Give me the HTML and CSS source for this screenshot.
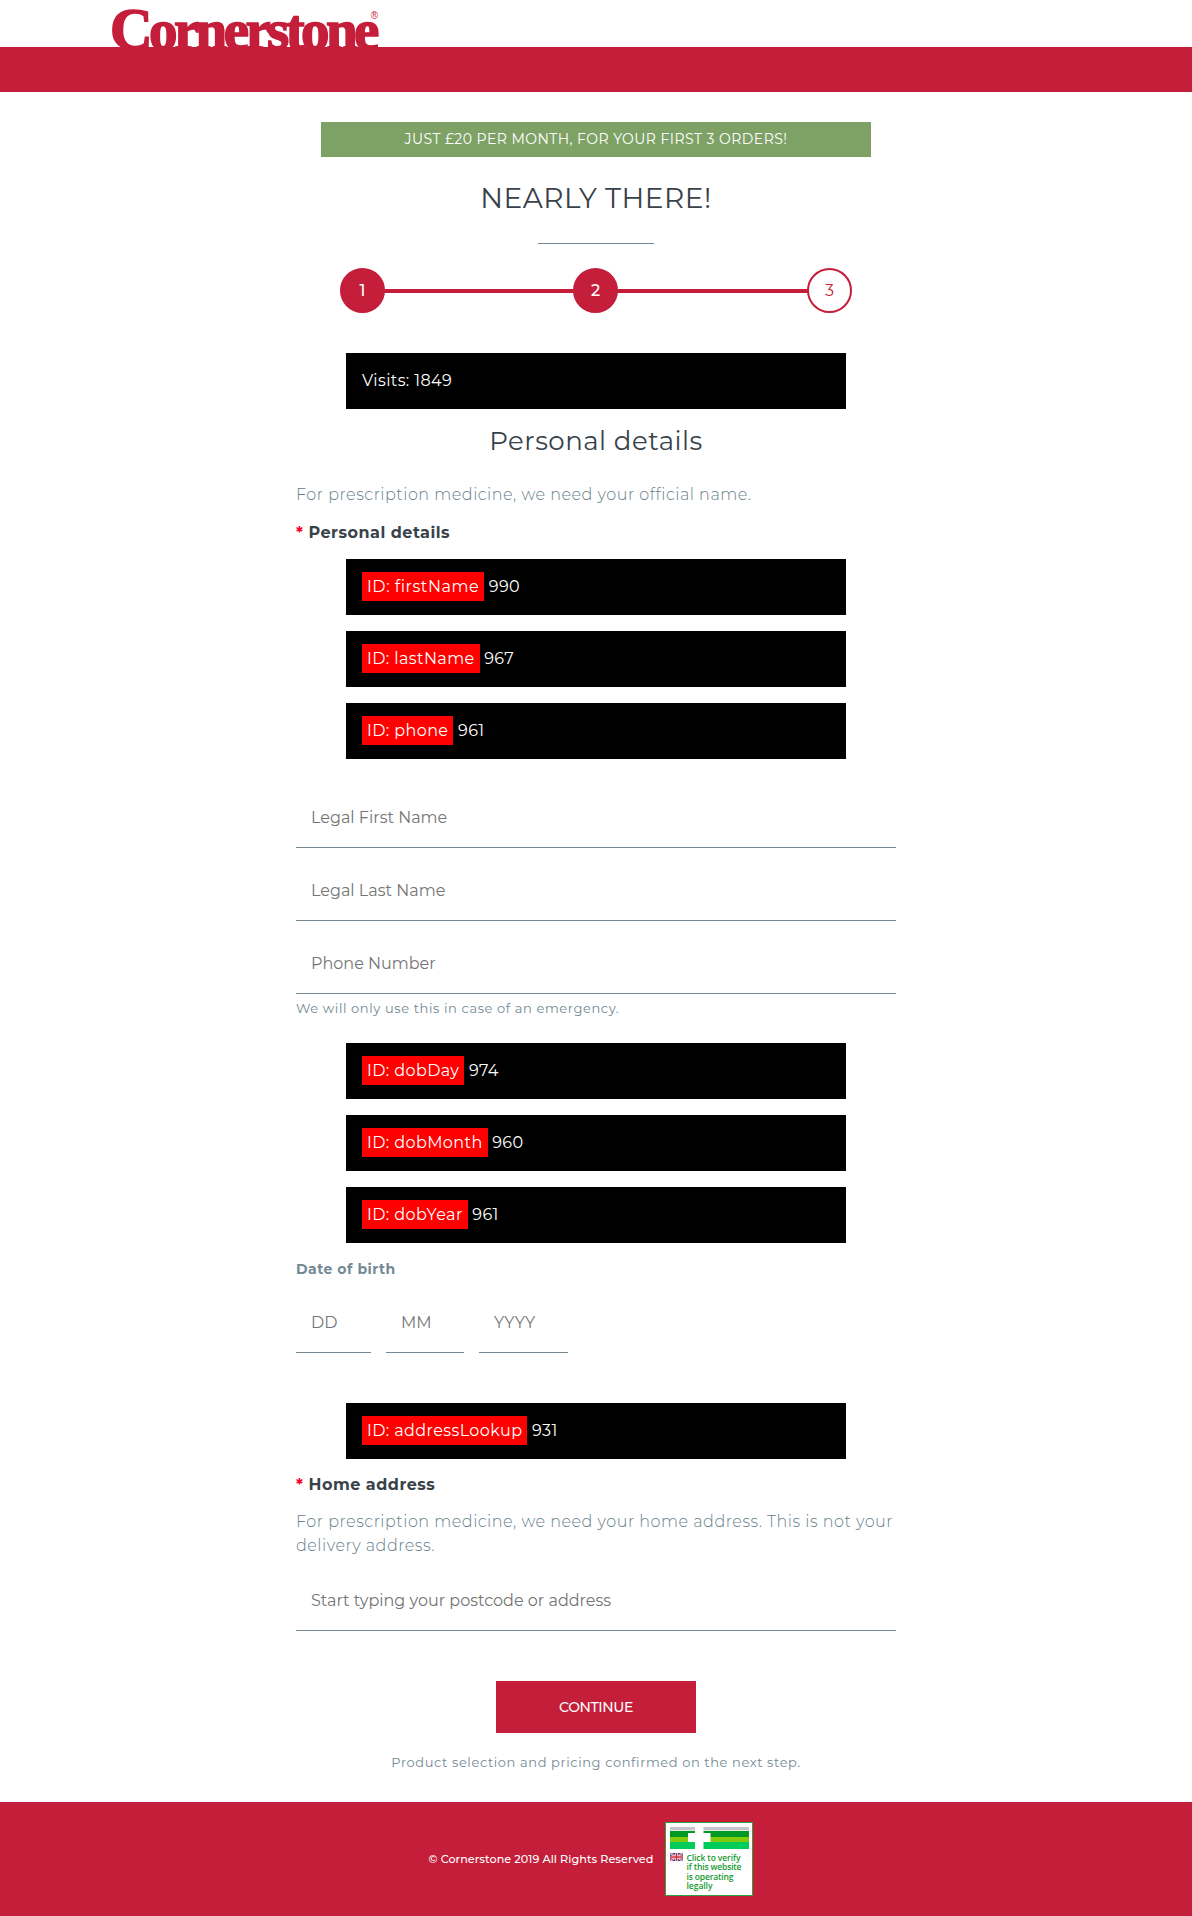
FILE: index.html
```html
<!DOCTYPE html>
<html lang="en">
<head>
<meta charset="utf-8">
<title>Cornerstone</title>
<link rel="stylesheet" href="styles.css">
</head>
<body>
<header class="header">
  <div class="brand"><span class="logo"><span class="cap">C</span>ornerstone</span><span class="reg">®</span></div>
  <div class="band"></div>
</header>
<main class="main">
  <div class="promo">JUST £20 PER MONTH, FOR YOUR FIRST 3 ORDERS!</div>
  <h1 class="title">NEARLY THERE!</h1>
  <div class="rule"></div>
  <div class="steps">
    <span class="step">1</span><span class="track"></span><span class="step">2</span><span class="track last"></span><span class="step next">3</span>
  </div>
  <div class="stat visits">Visits: 1849</div>
  <form class="form">
    <h2 class="subtitle">Personal details</h2>
    <p class="text intro">For prescription medicine, we need your official name.</p>
    <div class="label name-label"><span class="star">*</span> Personal details</div>
    <div class="stats name-stats">
      <div class="stat"><span class="tag first">ID: firstName</span> 990</div>
      <div class="stat"><span class="tag">ID: lastName</span> 967</div>
      <div class="stat"><span class="tag">ID: phone</span> 961</div>
    </div>
    <div class="fields">
      <input class="field" placeholder="Legal First Name">
      <input class="field" placeholder="Legal Last Name">
      <input class="field" placeholder="Phone Number">
    </div>
    <p class="small hint">We will only use this in case of an emergency.</p>
    <div class="stats dob-stats">
      <div class="stat"><span class="tag">ID: dobDay</span> 974</div>
      <div class="stat"><span class="tag">ID: dobMonth</span> 960</div>
      <div class="stat"><span class="tag">ID: dobYear</span> 961</div>
    </div>
    <div class="dob-label">Date of birth</div>
    <div class="dob">
      <input class="field day" placeholder="DD">
      <input class="field month" placeholder="MM">
      <input class="field year" placeholder="YYYY">
    </div>
    <div class="stat address-stat"><span class="tag">ID: addressLookup</span> 931</div>
    <div class="label home-label"><span class="star">*</span> Home address</div>
    <p class="text home-text">For prescription medicine, we need your home address. This is not your delivery address.</p>
    <input class="field address" placeholder="Start typing your postcode or address">
    <button class="button" type="button">CONTINUE</button>
    <p class="small note">Product selection and pricing confirmed on the next step.</p>
  </form>
</main>
<footer class="footer">
  <span class="copy">© Cornerstone 2019 All Rights Reserved</span>
  <svg class="badge" width="88" height="74" viewBox="0 0 88 74">
    <rect x=".5" y=".5" width="87" height="73" fill="#fff" stroke="#2fa044"/>
    <rect x="5" y="5" width="79" height="3.500" fill="#c6c7c8"/>
    <rect x="5" y="9" width="79" height="6" fill="#009a22"/>
    <rect x="5" y="15" width="79" height="5" fill="#80cc0c"/>
    <rect x="5" y="20" width="79" height="7" fill="#00cc5c"/>
    <path d="M30 4h8.500v7h7v9h-7v8h-8.500v-8h-7v-9h7z" fill="#fff"/>
    <g>
      <rect x="5" y="31" width="13" height="8" fill="#2b3f8c"/>
      <path d="M5 31l13 8M18 31l-13 8" stroke="#fff" stroke-width="1.800"/>
      <path d="M5 31l13 8M18 31l-13 8" stroke="#d8283c" stroke-width=".8"/>
      <path d="M11.500 31v8M5 35h13" stroke="#fff" stroke-width="2.600"/>
      <path d="M11.500 31v8M5 35h13" stroke="#d8283c" stroke-width="1.500"/>
    </g>
    <g class="badge-text">
      <text x="21.500" y="38.500" textLength="54">Click to verify</text>
      <text x="21.500" y="48" textLength="55">if this website</text>
      <text x="21.500" y="57.700" textLength="47">is operating</text>
      <text x="21.500" y="67.300" textLength="26">legally</text>
    </g>
  </svg>
</footer>
</body>
</html>
```
FILE: styles.css
```css
* { box-sizing: border-box; }
body {
  margin: 0;
  background: #fff;
  color: #38424a;
  font: 400 16px/24px Montserrat, Inter, sans-serif;
  letter-spacing: .4px;
}
h1, h2, p { margin: 0; font-weight: 400; }

.brand {
  display: flex;
  height: 47px;
  padding-left: 110px;
  color: #c41e3a;
}
.logo {
  font: 700 57px/60px "Liberation Serif", serif;
  letter-spacing: -3.6px;
  -webkit-text-stroke: 1.6px #c41e3a;
}
.cap { font-size: 59px; line-height: 1; }
.reg {
  margin-left: -5px;
  font: 10px/32px "Liberation Sans", sans-serif;
}
.band { height: 45px; background: #c41e3a; }

.main {
  display: flex;
  flex-direction: column;
  align-items: center;
  padding-top: 30px;
}
.promo {
  width: 550px;
  background: #7ea266;
  color: #fff;
  font-size: 14px;
  line-height: 35px;
  text-align: center;
  letter-spacing: .45px;
}
.title {
  margin-top: 21px;
  font-size: 28px;
  line-height: 40px;
  letter-spacing: .5px;
}
.rule {
  width: 116px;
  height: 1px;
  margin: 25px 0 24px;
  background: #738a94;
}
.steps {
  display: flex;
  align-items: center;
  width: 512px;
}
.step {
  width: 45px;
  height: 45px;
  border: 2px solid #c41e3a;
  border-radius: 50%;
  background: #c41e3a;
  color: #fff;
  font-weight: 500;
  line-height: 41px;
  text-align: center;
  letter-spacing: 0;
}
.step.next { background: #fff; color: #c41e3a; font-weight: 400; }
.track { flex: 0 0 190px; height: 4px; margin: 0 -1px; background: #c41e3a; }
.track.last { flex: 1; }

.stat {
  width: 500px;
  padding: 16px;
  background: #000;
  color: #fff;
}
.visits { margin-top: 40px; }
.tag { padding: 5px; background: #f00; }
.tag.first { letter-spacing: .54px; }
.stats {
  display: flex;
  flex-direction: column;
  align-items: center;
  gap: 16px;
}

.form {
  display: flex;
  flex-direction: column;
  width: 600px;
}
.subtitle {
  margin-top: 12px;
  font-size: 26px;
  line-height: 40px;
  letter-spacing: .5px;
  text-align: center;
}
.text { color: #68808b; font-weight: 300; letter-spacing: .51px; }
.intro { margin-top: 22px; }
.label { font-weight: 700; letter-spacing: .5px; }
.star { color: #f5002f; }
.name-label { margin-top: 14px; }
.name-stats { margin-top: 14px; }

.fields { display: flex; flex-direction: column; gap: 12px; margin-top: 28px; }
.field {
  width: 100%;
  height: 61px;
  padding: 0 15px;
  border: 0;
  border-bottom: 1px solid #738a94;
  background: transparent;
  font: 400 16px Montserrat, Inter, sans-serif;
}
.field::placeholder { color: #757575; }
.small {
  color: #738a94;
  font-size: 13px;
  line-height: 20px;
  letter-spacing: .6px;
}
.hint { margin-top: 4px; }
.dob-stats { margin-top: 25px; }
.dob-label {
  margin-top: 14px;
  color: #738a94;
  font-size: 14px;
  font-weight: 700;
  letter-spacing: .5px;
}
.dob { display: flex; gap: 15px; margin-top: 11px; }
.day { width: 75px; }
.month { width: 78px; }
.year { width: 89px; letter-spacing: -.4px; }
.address-stat { align-self: center; margin-top: 50px; }
.home-label { margin-top: 14px; }
.home-text { margin-top: 13px; }
.address { margin-top: 12px; }
.button {
  align-self: center;
  width: 200px;
  height: 52px;
  margin-top: 50px;
  border: 0;
  background: #c41e3a;
  color: #fff;
  font: 500 14px Montserrat, Inter, sans-serif;
  letter-spacing: -.4px;
}
.note { margin-top: 19px; text-align: center; }

.footer {
  display: flex;
  align-items: center;
  justify-content: center;
  height: 114px;
  margin-top: 30px;
  background: #c41e3a;
}
.copy {
  color: #fff;
  font-size: 11.2px;
  font-weight: 500;
  letter-spacing: .05px;
}
.badge { margin: 0 10px 0 12px; }
.badge-text {
  fill: #149a2e;
  font: 600 8.5px "Open Sans", sans-serif;
  letter-spacing: 0;
}
```
